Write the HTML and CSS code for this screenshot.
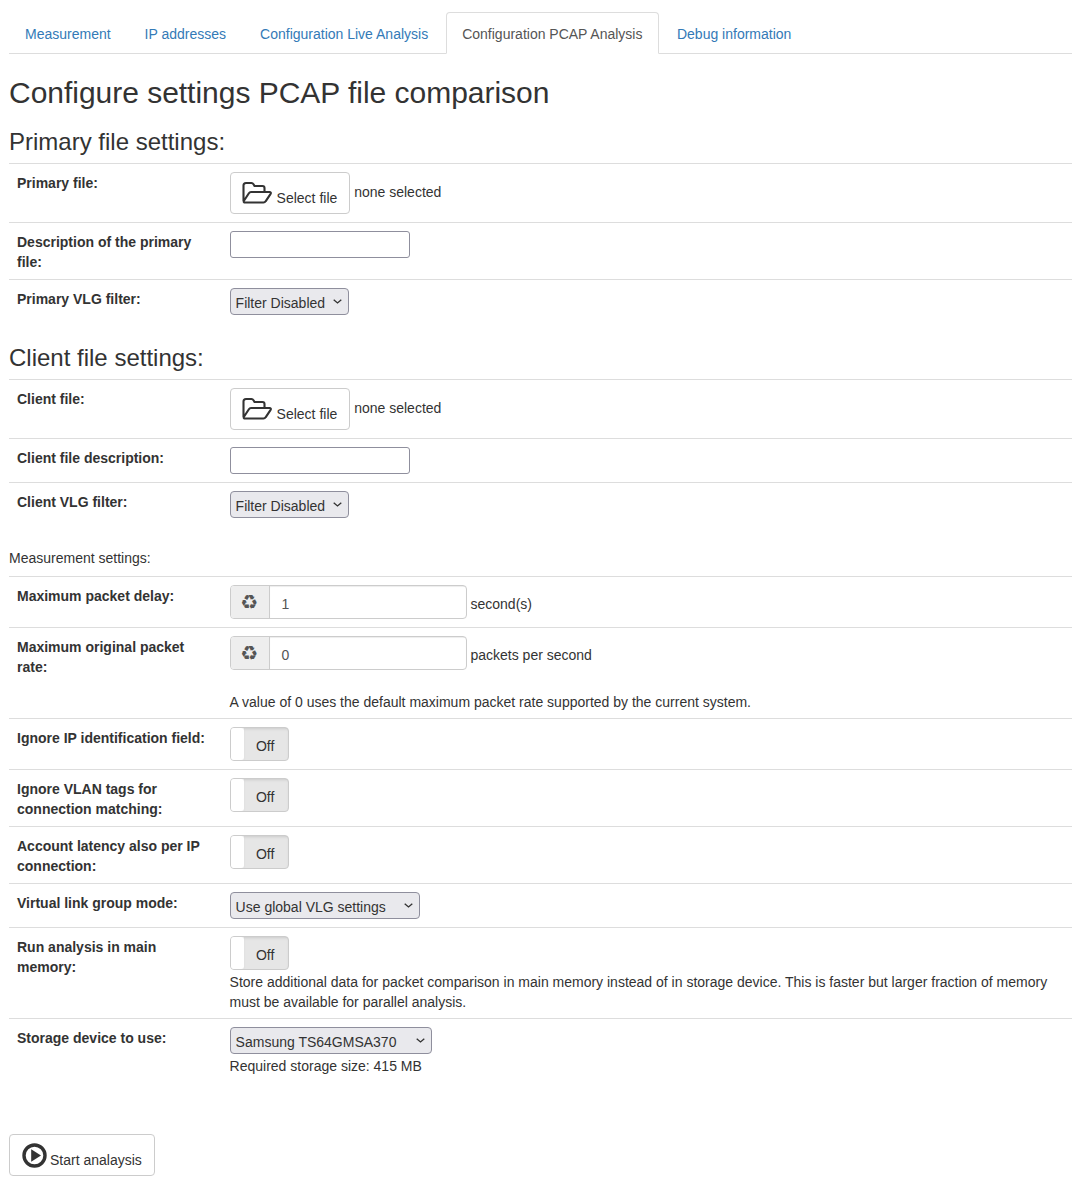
FILE: index.html
```html
<!DOCTYPE html>
<html lang="en">
<head>
<meta charset="utf-8">
<title>Configure settings PCAP file comparison</title>
<link rel="stylesheet" href="styles.css">
</head>
<body>
<ul class="tabs">
  <li><a href="#">Measurement</a></li>
  <li><a href="#">IP addresses</a></li>
  <li><a href="#">Configuration Live Analysis</a></li>
  <li class="active"><a href="#">Configuration PCAP Analysis</a></li>
  <li><a href="#">Debug information</a></li>
</ul>
<h2>Configure settings PCAP file comparison</h2>
<h3>Primary file settings:</h3>
<table class="settings">
  <tr>
    <th>Primary file:</th>
    <td><span class="btn"><svg class="icon-folder" viewBox="0 0 31 24" width="31" height="24"><path d="M1.500 20V4.500C1.500 3 2.500 2 4 2h5.500c.9 0 1.500.4 2 1.200l1 1.800h8c1.200 0 2 .9 2 2v3.500M3 21.500h18.500c1 0 1.600-.4 2.100-1.200l5-7.500c.6-1 0-1.800-1-1.800H9c-1 0-1.600.4-2.100 1.200L1.800 20c-.3.800.2 1.500 1.200 1.500z" fill="none" stroke="#333" stroke-width="2.100" stroke-linejoin="round"/></svg><span>Select file</span></span> <span>none selected</span></td>
  </tr>
  <tr>
    <th>Description of the primary file:</th>
    <td><input type="text" class="text"></td>
  </tr>
  <tr>
    <th>Primary VLG filter:</th>
    <td><select class="filter"><option>Filter Disabled</option></select></td>
  </tr>
</table>
<h3>Client file settings:</h3>
<table class="settings">
  <tr>
    <th>Client file:</th>
    <td><span class="btn"><svg class="icon-folder" viewBox="0 0 31 24" width="31" height="24"><path d="M1.500 20V4.500C1.500 3 2.500 2 4 2h5.500c.9 0 1.500.4 2 1.200l1 1.800h8c1.200 0 2 .9 2 2v3.500M3 21.500h18.500c1 0 1.600-.4 2.100-1.200l5-7.500c.6-1 0-1.800-1-1.800H9c-1 0-1.600.4-2.100 1.200L1.800 20c-.3.800.2 1.500 1.200 1.500z" fill="none" stroke="#333" stroke-width="2.100" stroke-linejoin="round"/></svg><span>Select file</span></span> <span>none selected</span></td>
  </tr>
  <tr>
    <th>Client file description:</th>
    <td><input type="text" class="text"></td>
  </tr>
  <tr>
    <th>Client VLG filter:</th>
    <td><select class="filter"><option>Filter Disabled</option></select></td>
  </tr>
</table>
<p class="section-label">Measurement settings:</p>
<table class="settings">
  <tr>
    <th>Maximum packet delay:</th>
    <td><span class="group"><span class="addon">&#9851;</span><span class="value">1</span></span> <span class="unit">second(s)</span></td>
  </tr>
  <tr>
    <th>Maximum original packet rate:</th>
    <td><span class="group"><span class="addon">&#9851;</span><span class="value">0</span></span> <span class="unit">packets per second</span>
      <p class="help spaced">A value of 0 uses the default maximum packet rate supported by the current system.</p></td>
  </tr>
  <tr>
    <th>Ignore IP identification field:</th>
    <td><span class="switch"><span class="handle"></span><span class="off">Off</span></span></td>
  </tr>
  <tr>
    <th>Ignore VLAN tags for connection matching:</th>
    <td><span class="switch"><span class="handle"></span><span class="off">Off</span></span></td>
  </tr>
  <tr>
    <th>Account latency also per IP connection:</th>
    <td><span class="switch"><span class="handle"></span><span class="off">Off</span></span></td>
  </tr>
  <tr>
    <th>Virtual link group mode:</th>
    <td><select class="mode"><option>Use global VLG settings</option></select></td>
  </tr>
  <tr>
    <th>Run analysis in main memory:</th>
    <td><span class="switch"><span class="handle"></span><span class="off">Off</span></span>
      <p class="help">Store additional data for packet comparison in main memory instead of in storage device. This is faster but larger fraction of memory must be available for parallel analysis.</p></td>
  </tr>
  <tr>
    <th>Storage device to use:</th>
    <td><select class="device"><option>Samsung TS64GMSA370</option></select>
      <p class="help">Required storage size: 415 MB</p></td>
  </tr>
</table>
<div class="actions">
  <span class="btn btn-start"><svg class="icon-play" viewBox="0 0 25 25" width="25" height="25"><circle cx="12.500" cy="12.500" r="10.500" fill="none" stroke="#333" stroke-width="3.400"/><path d="M9.200 6.200 19 12.500l-9.800 6.300z" fill="#333"/></svg><span>Start analaysis</span></span>
</div>
</body>
</html>
```
FILE: styles.css
```css
* { box-sizing: border-box; }
html, body { margin: 0; padding: 0; }
body {
  padding: 12px 3px 0 9px;
  font: 14px/20px "Liberation Sans", Arial, sans-serif;
  color: #333;
  background: #fff;
}
a { color: #337ab7; text-decoration: none; }

.tabs {
  display: flex;
  margin: 0;
  padding: 0;
  list-style: none;
  border-bottom: 1px solid #ddd;
}
.tabs li { margin-bottom: -1px; }
.tabs a {
  display: block;
  margin-right: 2px;
  padding: 11px 15px 9px;
  border: 1px solid transparent;
  border-radius: 4px 4px 0 0;
}
.tabs .active a {
  padding-right: 15.500px;
  color: #555;
  background: #fff;
  border-color: #ddd #ddd transparent;
}

h2, h3 { margin: 20px 0 10px; padding-top: 2px; font-weight: 500; }
h2 { height: 33px; font-size: 30px; line-height: 33px; letter-spacing: -.025px; }
h3 { height: 26px; font-size: 24px; line-height: 26px; }

.settings {
  width: 100%;
  margin-bottom: 20px;
  border-collapse: separate;
  border-spacing: 0;
}
.settings th, .settings td {
  padding: 8px;
  border-top: 1px solid #ddd;
  vertical-align: top;
  text-align: left;
}
.settings th { width: 20%; padding: 9px 8px 7px; font-weight: 700; }

.section-label { margin: 0 0 8px; padding-top: 2px; }

.btn {
  display: inline-flex;
  align-items: flex-end;
  gap: 4px;
  height: 42px;
  padding: 6px 12px;
  vertical-align: middle;
  background: #fff;
  border: 1px solid #ccc;
  border-radius: 4px;
}
.btn span { line-height: 18px; }
.btn-start { gap: 3px; }
.icon-folder { display: block; flex: none; align-self: flex-start; margin: 2px 0 0 -1px; }
.icon-play { display: block; flex: none; align-self: flex-start; margin-top: 2px; }

input.text {
  display: block;
  width: 180px;
  height: 27px;
  font: inherit;
  background: #fff;
  border: 1px solid #8f8f9d;
  border-radius: 3px;
}
select {
  display: block;
  height: 27px;
  padding: 2px 20px 0 5px;
  font: inherit;
  color: #333;
  appearance: none;
  background: #e9e9ed url("data:image/svg+xml,%3Csvg xmlns='http://www.w3.org/2000/svg' width='9' height='5'%3E%3Cpath d='M.7.7 4.500 4 8.300.7' fill='none' stroke='%23333' stroke-width='1.300'/%3E%3C/svg%3E") no-repeat right 6px center;
  border: 1px solid #8f8f9d;
  border-radius: 4px;
}
.filter { width: 119px; }
.mode { width: 190px; }
.device { width: 202px; }

.group {
  display: inline-flex;
  width: 237px;
  height: 34px;
  vertical-align: middle;
  border: 1px solid #ccc;
  border-radius: 4px;
  overflow: hidden;
}
.addon {
  width: 39px;
  flex: none;
  padding-right: 1px;
  text-align: center;
  font: 700 20px/33px "DejaVu Sans", sans-serif;
  color: #555;
  background: #eee;
  border-right: 1px solid #ccc;
}
.value {
  flex: 1;
  padding: 8px 12px 4px;
  color: #555;
  box-shadow: inset 0 1px 1px rgba(0, 0, 0, .075);
}
.unit { display: inline-block; padding-top: 4px; vertical-align: middle; }

.switch {
  display: flex;
  width: 59px;
  height: 34px;
  background: #e6e6e6;
  border: 1px solid #ccc;
  border-radius: 4px;
  overflow: hidden;
}
.handle { width: 13px; flex: none; background: #fff; border-radius: 0 3px 3px 0; }
.off {
  flex: 1;
  padding: 8px 1px 0 0;
  text-align: center;
  box-shadow: inset 0 2px 3px -1px rgba(0, 0, 0, .12);
}

.help { margin: 0 0 -2px; padding-top: 2px; }
.spaced { margin-top: 20px; }

.actions { margin-top: 52px; }
```
